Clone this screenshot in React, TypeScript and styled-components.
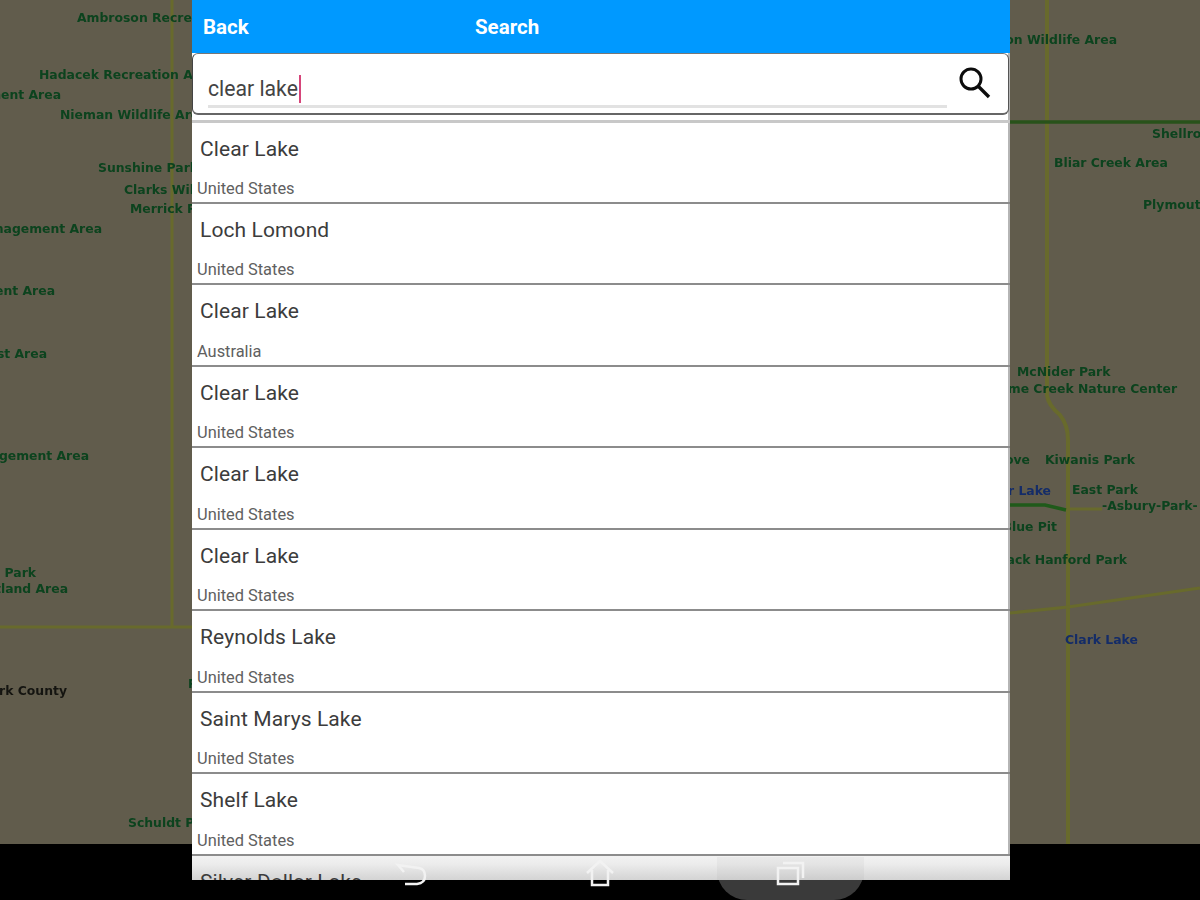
import React from 'react';
import styled, { createGlobalStyle } from 'styled-components';

const GlobalStyle = createGlobalStyle`
	html, body {
		margin: 0;
		padding: 0;
		background: #000;
		font-family: Roboto, 'Liberation Sans', sans-serif;
	}
`;

const Page = styled.div`
	position: relative;
	width: 1200px;
	height: 900px;
	overflow: hidden;
	background: #615c4c;
	filter: blur(0.5px);
`;

const MapCanvas = styled.div`
	position: absolute;
	inset: 0;
	filter: blur(0.4px);
`;

const Roads = styled.svg`
	position: absolute;
	inset: 0;
`;

const MapLabel = styled.span<{ $x: number; $y: number; $end?: boolean; $tone: string }>`
	position: absolute;
	left: ${(p) => p.$x}px;
	top: ${(p) => p.$y - 7}px;
	transform: ${(p) => (p.$end ? 'translateX(-100%)' : 'none')};
	font-family: 'DejaVu Sans', sans-serif;
	font-size: 12.4px;
	font-weight: bold;
	line-height: 16px;
	white-space: nowrap;
	color: ${(p) => p.$tone};
`;

const BlackBar = styled.div`
	position: absolute;
	left: 0;
	right: 0;
	bottom: 0;
	height: 56px;
	background: #000;
`;

const Bump = styled.div`
	position: absolute;
	left: 717px;
	bottom: 0;
	width: 147px;
	height: 40px;
	border-radius: 0 0 30px 30px;
	background: #3a3a3a;
`;

const BumpShade = styled.div`
	position: absolute;
	left: 717px;
	top: 857px;
	width: 147px;
	height: 23px;
	background: rgba(0, 0, 0, 0.03);
`;

const Panel = styled.div`
	position: relative;
	margin-left: 192px;
	width: 818px;
	height: 880px;
	overflow: hidden;
	background: #fff;
	box-shadow: inset -2px 0 0 #b5b5b5;
`;

const Header = styled.div`
	height: 53px;
	background: #0099ff;
	display: flex;
	align-items: center;
	padding-left: 11px;
	box-sizing: border-box;
	color: #fff;
	font-size: 20.5px;
	font-weight: 700;
`;

const BackLabel = styled.div`
	width: 272px;
`;

const SearchBox = styled.div`
	height: 62px;
	box-sizing: border-box;
	margin-right: 1px;
	border-radius: 6px;
	border-top: 1px solid #777;
	border-bottom: 2px solid #666;
	border-left: 1px solid #444;
	border-right: 1px solid #555;
	background: #fff;
	display: flex;
	align-items: flex-start;
	padding: 0 16px 0 15px;
`;

const InputWrap = styled.div`
	flex: 1;
	height: 49px;
	margin-right: 11px;
	border-bottom: 3px solid #e2e2e2;
	display: flex;
	align-items: flex-end;
	padding-bottom: 2px;
	font-size: 21.2px;
	color: #444;
	line-height: 28px;
`;

const Caret = styled.span`
	display: inline-block;
	width: 2px;
	height: 28px;
	margin-left: 1px;
	background: #d6457a;
`;

const SearchGlyph = styled.svg`
	margin-top: 12px;
	width: 34px;
	height: 34px;
`;

const Spacer = styled.div`
	height: 8px;
	border-bottom: 3px solid #c8c8c8;
	box-sizing: border-box;
`;

const Results = styled.div`
	display: flex;
	flex-direction: column;
`;

const Row = styled.div<{ $faded?: boolean }>`
	height: 81.5px;
	flex: none;
	box-sizing: border-box;
	border-bottom: 2px solid #8c8c8c;
	padding: 12px 0 4px 8px;
	display: flex;
	flex-direction: column;
	justify-content: space-between;
	background: ${(p) =>
		p.$faded ? 'linear-gradient(#f2f2f2, #ececec 8px, #d2d2d2 25px, #d2d2d2)' : 'transparent'};

	&:first-child {
		height: 80.5px;
	}
`;

const RowTitle = styled.div`
	font-size: 21px;
	line-height: 28px;
	letter-spacing: 0.1px;
	color: #3c3c3c;
`;

const RowSub = styled.div`
	margin-left: -3px;
	font-size: 16.4px;
	line-height: 18px;
	color: #606060;
`;

const NavIcons = styled.div`
	position: absolute;
	left: 0;
	right: 0;
	top: 855px;
	height: 36px;
	display: flex;
	justify-content: center;
	align-items: center;
	gap: 153px;
`;

const NavGlyph = styled.svg`
	width: 36px;
	height: 36px;
	fill: none;
	stroke: #f2f2f2;
	stroke-width: 2.5;
`;

type LabelData = { x: number; y: number; text: string; end?: boolean; tone?: string };

const GREEN = '#0c431e';
const BLUE = '#142c68';

const labels: LabelData[] = [
	{ x: 77, y: 17, text: 'Ambroson Recreation Area' },
	{ x: 39, y: 74, text: 'Hadacek Recreation Area' },
	{ x: 61, y: 94, text: 'Management Area', end: true },
	{ x: 60, y: 114, text: 'Nieman Wildlife Area' },
	{ x: 98, y: 167, text: 'Sunshine Park' },
	{ x: 124, y: 189, text: 'Clarks Wildlife' },
	{ x: 130, y: 208, text: 'Merrick Park' },
	{ x: 102, y: 228, text: 'Management Area', end: true },
	{ x: 55, y: 290, text: 'Management Area', end: true },
	{ x: 47, y: 353, text: 'Forest Area', end: true },
	{ x: 89, y: 455, text: 'Management Area', end: true },
	{ x: 36, y: 572, text: 'Wetland Park', end: true },
	{ x: 68, y: 588, text: 'Wetland Area', end: true },
	{ x: 67, y: 690, text: 'Clark County', end: true, tone: '#141410' },
	{ x: 128, y: 822, text: 'Schuldt Park' },
	{ x: 188, y: 683, text: 'Park' },
	{ x: 1117, y: 39, text: 'Dawson Wildlife Area', end: true },
	{ x: 1152, y: 133, text: 'Shellrock' },
	{ x: 1054, y: 162, text: 'Bliar Creek Area' },
	{ x: 1143, y: 204, text: 'Plymouth' },
	{ x: 1017, y: 371, text: 'McNider Park' },
	{ x: 1177, y: 388, text: 'Lime Creek Nature Center', end: true },
	{ x: 1030, y: 459, text: 'Cove', end: true },
	{ x: 1045, y: 459, text: 'Kiwanis Park' },
	{ x: 1051, y: 490, text: 'Clear Lake', end: true, tone: BLUE },
	{ x: 1072, y: 489, text: 'East Park' },
	{ x: 1102, y: 505, text: '-Asbury-Park-' },
	{ x: 1057, y: 526, text: 'Blue Pit', end: true },
	{ x: 1127, y: 559, text: 'Jack Hanford Park', end: true },
	{ x: 1065, y: 639, text: 'Clark Lake', tone: BLUE },
];

const results = [
	{ name: 'Clear Lake', country: 'United States' },
	{ name: 'Loch Lomond', country: 'United States' },
	{ name: 'Clear Lake', country: 'Australia' },
	{ name: 'Clear Lake', country: 'United States' },
	{ name: 'Clear Lake', country: 'United States' },
	{ name: 'Clear Lake', country: 'United States' },
	{ name: 'Reynolds Lake', country: 'United States' },
	{ name: 'Saint Marys Lake', country: 'United States' },
	{ name: 'Shelf Lake', country: 'United States' },
];

export default function App(): React.ReactElement {
	return (
		<>
			<GlobalStyle />
			<Page>
				<MapCanvas>
					<Roads width="1200" height="900" fill="none" stroke="#686a2c" strokeWidth="3">
						<path d="M172 0V627M0 627H192" />
						<path d="M1047 0V395Q1048 405 1060 415Q1068 425 1068 440V844" strokeWidth="4" />
						<path d="M1010 613L1068 607L1200 588" />
						<path d="M1066 509H1102" />
						<path d="M1010 122H1200" stroke="#28521a" strokeWidth="3.5" />
						<path d="M1010 505L1045 505L1066 510" stroke="#1f5a1a" strokeWidth="3.5" />
					</Roads>
					{labels.map((label) => (
						<MapLabel
							key={`${label.text}-${label.y}`}
							$x={label.x}
							$y={label.y}
							$end={label.end}
							$tone={label.tone ?? GREEN}
						>
							{label.text}
						</MapLabel>
					))}
				</MapCanvas>
				<BlackBar>
					<Bump />
				</BlackBar>
				<Panel>
					<Header>
						<BackLabel>Back</BackLabel>
						<div>Search</div>
					</Header>
					<SearchBox>
						<InputWrap>
							clear lake
							<Caret />
						</InputWrap>
						<SearchGlyph viewBox="0 0 34 34" fill="none" stroke="#0c0c0c">
							<circle cx="13" cy="13" r="10" strokeWidth="3" />
							<path d="M20.5 20.5L31 31" strokeWidth="3.4" />
						</SearchGlyph>
					</SearchBox>
					<Spacer />
					<Results>
						{results.map((row, i) => (
							<Row key={`${row.name}-${i}`}>
								<RowTitle>{row.name}</RowTitle>
								<RowSub>{row.country}</RowSub>
							</Row>
						))}
						<Row $faded>
							<RowTitle>Silver Dollar Lake</RowTitle>
							<RowSub>United States</RowSub>
						</Row>
					</Results>
				</Panel>
				<BumpShade />
				<NavIcons>
					<NavGlyph viewBox="0 0 36 36">
						<path d="M11 17L5 10L26 13Q32 14 32 21Q32 28 24 29H12" />
					</NavGlyph>
					<NavGlyph viewBox="0 0 36 36">
						<path d="M5 18L18 6L31 18M10 15V30H26V15" />
					</NavGlyph>
					<NavGlyph viewBox="0 0 36 36">
						<path d="M7 13H27V29H7ZM12 8H32V23" />
					</NavGlyph>
				</NavIcons>
			</Page>
		</>
	);
}
